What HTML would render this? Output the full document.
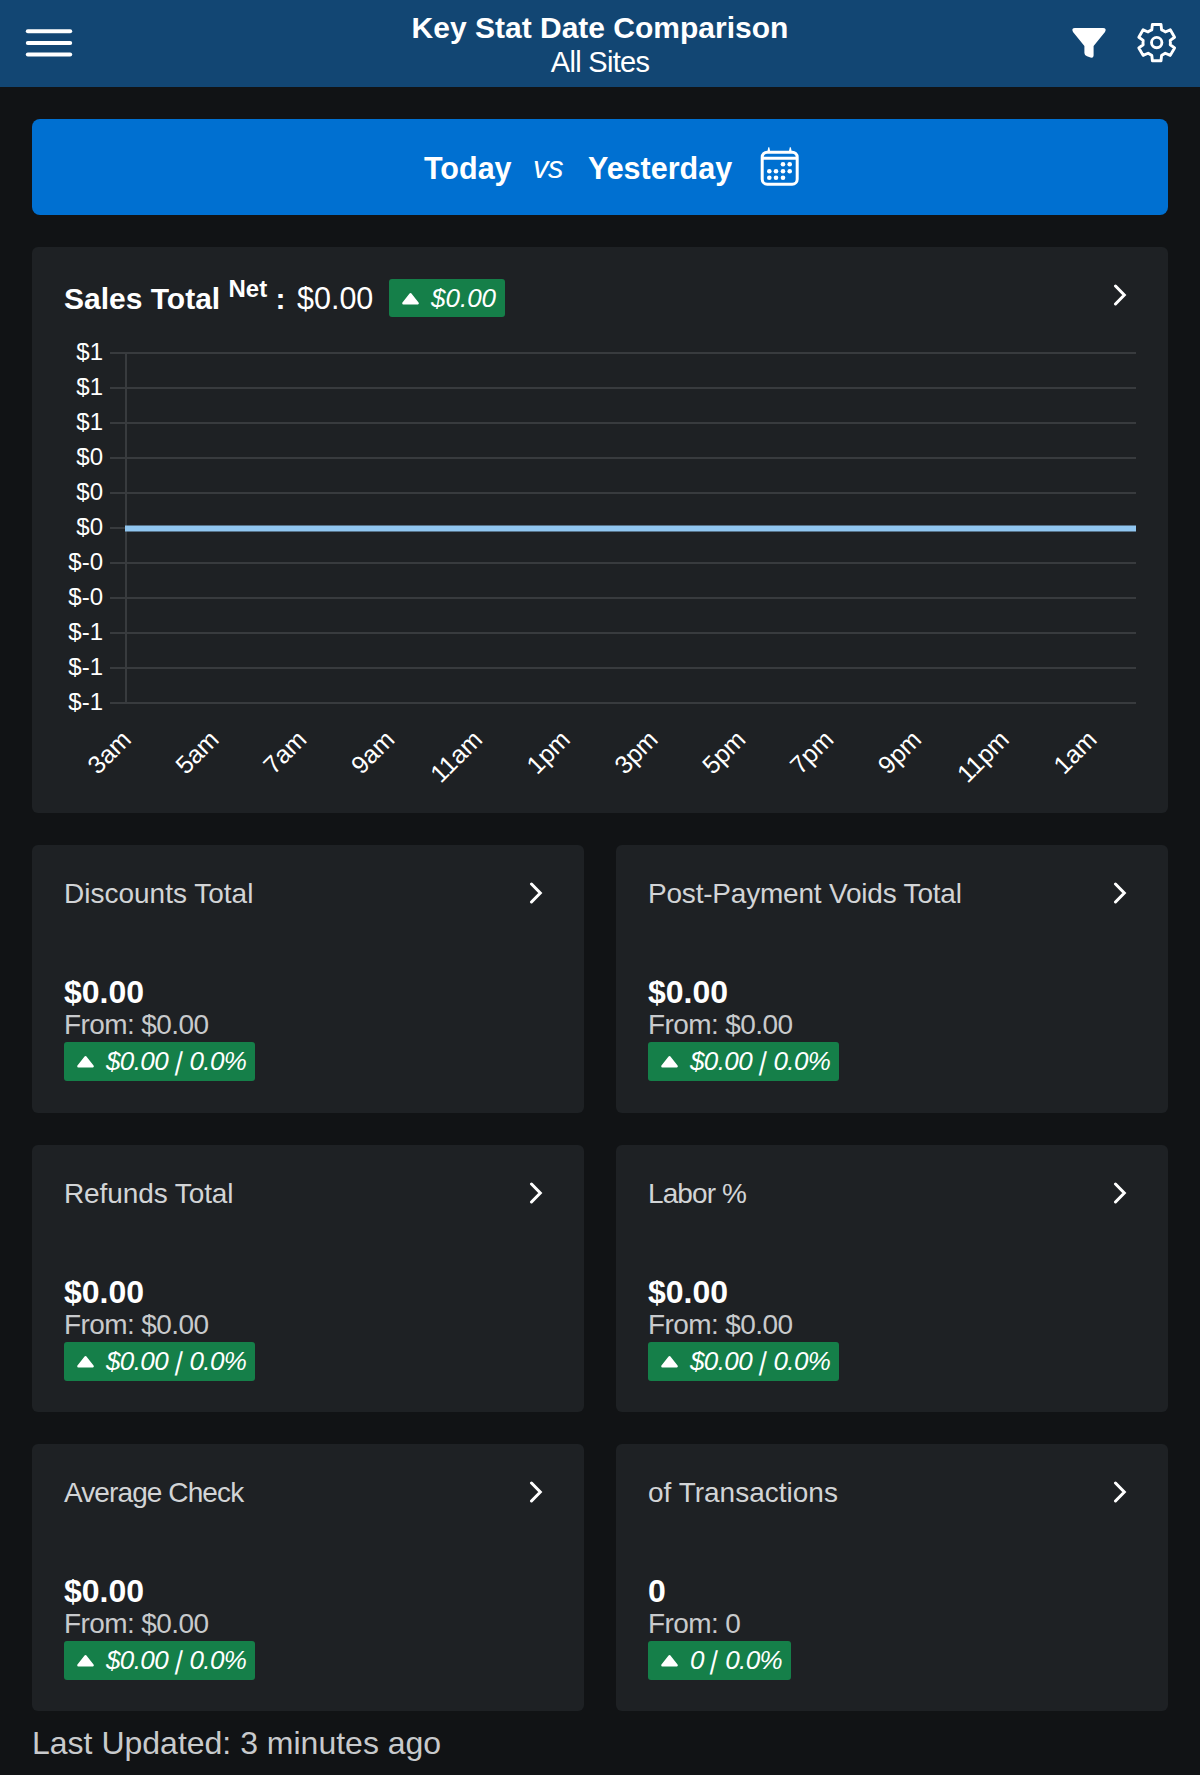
<!DOCTYPE html>
<html><head><meta charset="utf-8">
<style>
*{margin:0;padding:0;box-sizing:border-box}
html,body{width:1200px;height:1775px;overflow:hidden;background:#111315;font-family:"Liberation Sans",sans-serif;color:#fff}
.abs{position:absolute}
#hdr{position:absolute;left:0;top:0;width:1200px;height:87px;background:#124673}
#hdr .t1{position:absolute;left:0;width:1200px;top:11px;text-align:center;font-weight:bold;font-size:30px;line-height:34px}
#hdr .t2{position:absolute;left:0;width:1200px;top:46px;text-align:center;font-size:29px;line-height:32px;letter-spacing:-0.7px}
#btn{position:absolute;left:32px;top:119px;width:1136px;height:96px;background:#0070d1;border-radius:8px}
.card{position:absolute;background:#1e2124;border-radius:6px}
.ctitle{position:absolute;left:32px;top:33px;font-size:28px;line-height:32px;color:#d2d4d6;letter-spacing:-0.2px;white-space:nowrap}
.cval{position:absolute;left:32px;top:129px;font-size:32px;line-height:36px;font-weight:bold}
.cfrom{position:absolute;left:32px;top:164px;font-size:28px;line-height:32px;color:#c8cacc;letter-spacing:-0.6px;white-space:nowrap}
.badge{position:absolute;left:32px;top:197px;height:39px;background:#157f49;border-radius:3px;font-style:italic;font-size:26px;line-height:38px;padding-left:42px;padding-right:9px;color:#fff;letter-spacing:-0.6px;white-space:nowrap}
.tri{position:absolute;left:12px;top:14px}
.chev{position:absolute}
.sl{display:inline-block;transform:skewX(-14deg);font-style:normal;margin:0 1px}
</style></head><body>

<div id="hdr">
  <svg class="abs" style="left:0;top:0" width="90" height="87" viewBox="0 0 90 87">
    <g stroke="#fff" stroke-width="4" stroke-linecap="round"><line x1="27.8" x2="70.2" y1="31.3" y2="31.3"/><line x1="27.8" x2="70.2" y1="43" y2="43"/><line x1="27.8" x2="70.2" y1="54.6" y2="54.6"/></g>
  </svg>
  <div class="t1">Key Stat Date Comparison</div>
  <div class="t2">All Sites</div>
  <svg class="abs" style="left:1070px;top:26px" width="38" height="34" viewBox="0 0 38 34">
    <path d="M5 2 H33 Q37 2 35 6 L23.6 20 V29.5 Q23.6 32.2 20.5 31.6 L17 30.3 Q14.4 29.3 14.4 27 V20 L3 6 Q1 2 5 2 Z" fill="#fff"/>
  </svg>
  <svg class="abs" style="left:1126px;top:12px" width="62" height="62" viewBox="0 0 62 62"><path fill="none" stroke="#fff" stroke-width="2.9" stroke-linejoin="round" d="M25.80 17.81 L26.40 12.45 L35.00 12.45 L35.60 17.81 A13.7 13.7 0 0 1 39.33 19.96 L44.27 17.80 L48.57 25.25 L44.23 28.45 A13.7 13.7 0 0 1 44.23 32.75 L48.57 35.95 L44.27 43.40 L39.33 41.24 A13.7 13.7 0 0 1 35.60 43.39 L35.00 48.75 L26.40 48.75 L25.80 43.39 A13.7 13.7 0 0 1 22.07 41.24 L17.13 43.40 L12.83 35.95 L17.17 32.75 A13.7 13.7 0 0 1 17.17 28.45 L12.83 25.25 L17.13 17.80 L22.07 19.96 A13.7 13.7 0 0 1 25.80 17.81 Z"/><circle cx="30.7" cy="30.6" r="5.2" fill="none" stroke="#fff" stroke-width="2.9"/></svg>
</div>
<div id="btn">
  <div class="abs" style="left:392px;top:31px;font-size:30.5px;line-height:36px;font-weight:bold">Today</div>
  <div class="abs" style="left:501px;top:31px;font-size:31px;line-height:36px;font-style:italic;letter-spacing:-0.5px">vs</div>
  <div class="abs" style="left:556px;top:31px;font-size:30.5px;line-height:36px;font-weight:bold">Yesterday</div>
</div>
<svg class="abs" style="left:0;top:0" width="1200" height="240" viewBox="0 0 1200 240">
  <g fill="none" stroke="#fff" stroke-width="3">
    <rect x="762.2" y="152.2" width="35" height="32" rx="5"/>
    <line x1="762" x2="797" y1="158.2" y2="158.2"/>
  </g>
  <g fill="#fff"><path d="M767.3 152 L768.3 147.2 L769.3 147.2 L770.3 152Z"/><path d="M788.8 152 L789.8 147.2 L790.8 147.2 L791.8 152Z"/></g>
  <g fill="#fff">
<circle cx="783" cy="164.3" r="2.3"/><circle cx="789.7" cy="164.3" r="2.3"/><circle cx="769.3" cy="171.3" r="2.3"/><circle cx="776" cy="171.3" r="2.3"/><circle cx="783" cy="171.3" r="2.3"/><circle cx="789.7" cy="171.3" r="2.3"/><circle cx="769.3" cy="177.7" r="2.3"/><circle cx="776" cy="177.7" r="2.3"/><circle cx="783" cy="177.7" r="2.3"/>
</g></svg>
<div class="card" style="left:32px;top:247px;width:1136px;height:566px">
  <div class="abs" style="left:32px;top:34px;font-size:30px;line-height:34px;white-space:nowrap;font-weight:bold">Sales Total <span style="font-size:24px;position:relative;top:-12px">Net</span> :<span style="font-weight:normal;font-size:30.5px;margin-left:3px"> $0.00</span></div>
  <div class="abs" style="left:357px;top:32px;width:116px;height:38px;background:#157f49;border-radius:3px;font-style:italic;font-size:26px;line-height:38px;padding-left:42px;color:#fff"><svg class="tri" width="20" height="14" viewBox="0 0 20 14"><path d="M9.5 1.3 L16.6 10.3 H2.4 Z" fill="#fff" stroke="#fff" stroke-width="2.4" stroke-linejoin="round"/></svg>$0.00</div>
  <svg class="chev" style="left:1074px;top:35px" width="24" height="24" viewBox="0 0 24 24"><path d="M9.5 4 L18.3 13 L9.5 22" fill="none" stroke="#fff" stroke-width="3" stroke-linecap="round" stroke-linejoin="miter"/></svg>
</div>
<svg class="abs" style="left:0;top:0" width="1200" height="830" viewBox="0 0 1200 830">
<line x1="110" x2="1136" y1="353" y2="353" stroke="#383b3e" stroke-width="2"/>
<line x1="110" x2="1136" y1="388" y2="388" stroke="#383b3e" stroke-width="2"/>
<line x1="110" x2="1136" y1="423" y2="423" stroke="#383b3e" stroke-width="2"/>
<line x1="110" x2="1136" y1="458" y2="458" stroke="#383b3e" stroke-width="2"/>
<line x1="110" x2="1136" y1="493" y2="493" stroke="#383b3e" stroke-width="2"/>
<line x1="110" x2="1136" y1="528" y2="528" stroke="#383b3e" stroke-width="2"/>
<line x1="110" x2="1136" y1="563" y2="563" stroke="#383b3e" stroke-width="2"/>
<line x1="110" x2="1136" y1="598" y2="598" stroke="#383b3e" stroke-width="2"/>
<line x1="110" x2="1136" y1="633" y2="633" stroke="#383b3e" stroke-width="2"/>
<line x1="110" x2="1136" y1="668" y2="668" stroke="#383b3e" stroke-width="2"/>
<line x1="110" x2="1136" y1="703" y2="703" stroke="#383b3e" stroke-width="2"/>
<line x1="126" x2="126" y1="352" y2="704" stroke="#383b3e" stroke-width="2"/>
<line x1="125" x2="1136" y1="528.4" y2="528.4" stroke="#90c6f0" stroke-width="6"/>
<text x="103" y="360" text-anchor="end" font-size="24" fill="#fff" font-family="Liberation Sans">$1</text>
<text x="103" y="395" text-anchor="end" font-size="24" fill="#fff" font-family="Liberation Sans">$1</text>
<text x="103" y="430" text-anchor="end" font-size="24" fill="#fff" font-family="Liberation Sans">$1</text>
<text x="103" y="465" text-anchor="end" font-size="24" fill="#fff" font-family="Liberation Sans">$0</text>
<text x="103" y="500" text-anchor="end" font-size="24" fill="#fff" font-family="Liberation Sans">$0</text>
<text x="103" y="535" text-anchor="end" font-size="24" fill="#fff" font-family="Liberation Sans">$0</text>
<text x="103" y="570" text-anchor="end" font-size="24" fill="#fff" font-family="Liberation Sans">$-0</text>
<text x="103" y="605" text-anchor="end" font-size="24" fill="#fff" font-family="Liberation Sans">$-0</text>
<text x="103" y="640" text-anchor="end" font-size="24" fill="#fff" font-family="Liberation Sans">$-1</text>
<text x="103" y="675" text-anchor="end" font-size="24" fill="#fff" font-family="Liberation Sans">$-1</text>
<text x="103" y="710" text-anchor="end" font-size="24" fill="#fff" font-family="Liberation Sans">$-1</text>
<text transform="translate(132.5,741) rotate(-45)" text-anchor="end" font-size="25" fill="#fff" font-family="Liberation Sans">3am</text>
<text transform="translate(220.3,741) rotate(-45)" text-anchor="end" font-size="25" fill="#fff" font-family="Liberation Sans">5am</text>
<text transform="translate(308.1,741) rotate(-45)" text-anchor="end" font-size="25" fill="#fff" font-family="Liberation Sans">7am</text>
<text transform="translate(395.9,741) rotate(-45)" text-anchor="end" font-size="25" fill="#fff" font-family="Liberation Sans">9am</text>
<text transform="translate(483.7,741) rotate(-45)" text-anchor="end" font-size="25" fill="#fff" font-family="Liberation Sans">11am</text>
<text transform="translate(571.5,741) rotate(-45)" text-anchor="end" font-size="25" fill="#fff" font-family="Liberation Sans">1pm</text>
<text transform="translate(659.3,741) rotate(-45)" text-anchor="end" font-size="25" fill="#fff" font-family="Liberation Sans">3pm</text>
<text transform="translate(747.1,741) rotate(-45)" text-anchor="end" font-size="25" fill="#fff" font-family="Liberation Sans">5pm</text>
<text transform="translate(834.9,741) rotate(-45)" text-anchor="end" font-size="25" fill="#fff" font-family="Liberation Sans">7pm</text>
<text transform="translate(922.7,741) rotate(-45)" text-anchor="end" font-size="25" fill="#fff" font-family="Liberation Sans">9pm</text>
<text transform="translate(1010.5,741) rotate(-45)" text-anchor="end" font-size="25" fill="#fff" font-family="Liberation Sans">11pm</text>
<text transform="translate(1098.3,741) rotate(-45)" text-anchor="end" font-size="25" fill="#fff" font-family="Liberation Sans">1am</text>
</svg>
<div class="card" style="left:32px;top:845px;width:552px;height:268px">
  <div class="ctitle" style="letter-spacing:0.0px">Discounts Total</div>
  <svg class="chev" style="left:490px;top:35px" width="24" height="24" viewBox="0 0 24 24"><path d="M9.5 4 L18.3 13 L9.5 22" fill="none" stroke="#fff" stroke-width="3" stroke-linecap="round" stroke-linejoin="miter"/></svg>
  <div class="cval">$0.00</div>
  <div class="cfrom">From: $0.00</div>
  <div class="badge"><svg class="tri" width="20" height="14" viewBox="0 0 20 14"><path d="M9.5 1.3 L16.6 10.3 H2.4 Z" fill="#fff" stroke="#fff" stroke-width="2.4" stroke-linejoin="round"/></svg>$0.00 <i class=sl>|</i> 0.0%</div>
</div>
<div class="card" style="left:616px;top:845px;width:552px;height:268px">
  <div class="ctitle" style="letter-spacing:-0.2px">Post-Payment Voids Total</div>
  <svg class="chev" style="left:490px;top:35px" width="24" height="24" viewBox="0 0 24 24"><path d="M9.5 4 L18.3 13 L9.5 22" fill="none" stroke="#fff" stroke-width="3" stroke-linecap="round" stroke-linejoin="miter"/></svg>
  <div class="cval">$0.00</div>
  <div class="cfrom">From: $0.00</div>
  <div class="badge"><svg class="tri" width="20" height="14" viewBox="0 0 20 14"><path d="M9.5 1.3 L16.6 10.3 H2.4 Z" fill="#fff" stroke="#fff" stroke-width="2.4" stroke-linejoin="round"/></svg>$0.00 <i class=sl>|</i> 0.0%</div>
</div>
<div class="card" style="left:32px;top:1145px;width:552px;height:267px">
  <div class="ctitle" style="letter-spacing:-0.1px">Refunds Total</div>
  <svg class="chev" style="left:490px;top:35px" width="24" height="24" viewBox="0 0 24 24"><path d="M9.5 4 L18.3 13 L9.5 22" fill="none" stroke="#fff" stroke-width="3" stroke-linecap="round" stroke-linejoin="miter"/></svg>
  <div class="cval">$0.00</div>
  <div class="cfrom">From: $0.00</div>
  <div class="badge"><svg class="tri" width="20" height="14" viewBox="0 0 20 14"><path d="M9.5 1.3 L16.6 10.3 H2.4 Z" fill="#fff" stroke="#fff" stroke-width="2.4" stroke-linejoin="round"/></svg>$0.00 <i class=sl>|</i> 0.0%</div>
</div>
<div class="card" style="left:616px;top:1145px;width:552px;height:267px">
  <div class="ctitle" style="letter-spacing:-0.9px">Labor %</div>
  <svg class="chev" style="left:490px;top:35px" width="24" height="24" viewBox="0 0 24 24"><path d="M9.5 4 L18.3 13 L9.5 22" fill="none" stroke="#fff" stroke-width="3" stroke-linecap="round" stroke-linejoin="miter"/></svg>
  <div class="cval">$0.00</div>
  <div class="cfrom">From: $0.00</div>
  <div class="badge"><svg class="tri" width="20" height="14" viewBox="0 0 20 14"><path d="M9.5 1.3 L16.6 10.3 H2.4 Z" fill="#fff" stroke="#fff" stroke-width="2.4" stroke-linejoin="round"/></svg>$0.00 <i class=sl>|</i> 0.0%</div>
</div>
<div class="card" style="left:32px;top:1444px;width:552px;height:267px">
  <div class="ctitle" style="letter-spacing:-0.9px">Average Check</div>
  <svg class="chev" style="left:490px;top:35px" width="24" height="24" viewBox="0 0 24 24"><path d="M9.5 4 L18.3 13 L9.5 22" fill="none" stroke="#fff" stroke-width="3" stroke-linecap="round" stroke-linejoin="miter"/></svg>
  <div class="cval">$0.00</div>
  <div class="cfrom">From: $0.00</div>
  <div class="badge"><svg class="tri" width="20" height="14" viewBox="0 0 20 14"><path d="M9.5 1.3 L16.6 10.3 H2.4 Z" fill="#fff" stroke="#fff" stroke-width="2.4" stroke-linejoin="round"/></svg>$0.00 <i class=sl>|</i> 0.0%</div>
</div>
<div class="card" style="left:616px;top:1444px;width:552px;height:267px">
  <div class="ctitle" style="letter-spacing:0.0px">of Transactions</div>
  <svg class="chev" style="left:490px;top:35px" width="24" height="24" viewBox="0 0 24 24"><path d="M9.5 4 L18.3 13 L9.5 22" fill="none" stroke="#fff" stroke-width="3" stroke-linecap="round" stroke-linejoin="miter"/></svg>
  <div class="cval">0</div>
  <div class="cfrom">From: 0</div>
  <div class="badge"><svg class="tri" width="20" height="14" viewBox="0 0 20 14"><path d="M9.5 1.3 L16.6 10.3 H2.4 Z" fill="#fff" stroke="#fff" stroke-width="2.4" stroke-linejoin="round"/></svg>0 <i class=sl>|</i> 0.0%</div>
</div>
<div class="abs" style="left:32px;top:1724px;font-size:32px;line-height:38px;color:#c8cacc;white-space:nowrap">Last Updated: 3 minutes ago</div>
</body></html>
